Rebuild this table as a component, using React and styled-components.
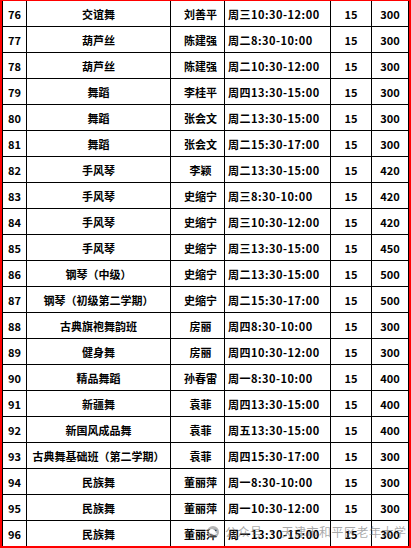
import React from 'react';
import styled, { createGlobalStyle } from 'styled-components';

const GlobalStyle = createGlobalStyle`
  html, body {
    margin: 0;
    padding: 0;
    background: #fff;
  }
`;

const Frame = styled.div`
  position: relative;
  width: 411px;
  height: 548px;
  box-sizing: border-box;
  border: 2px solid #f00;
  border-top-width: 1px;
  background: #fff;
  overflow: hidden;
  font-family: "Noto Sans CJK SC", "Noto Sans", sans-serif;
  font-weight: 700;
  font-size: 11px;
  color: #000;
`;

const Row = styled.div`
  display: grid;
  grid-template-columns: 24px 144px 54px 106px 41px 37px;
  height: 26px;
  box-sizing: border-box;
  border-left: 1px solid #000;
  border-bottom: 1px solid #000;
`;

const Cell = styled.div`
  display: flex;
  align-items: center;
  justify-content: ${(p) => (p.left ? 'flex-start' : 'center')};
  padding-left: ${(p) => p.pl || 0}px;
  box-sizing: border-box;
  border-right: 1px solid #000;
  white-space: nowrap;
  overflow: hidden;
  letter-spacing: ${(p) => p.ls || 0}px;
`;

const Watermark = styled.div`
  position: absolute;
  left: 205px;
  bottom: 6px;
  display: flex;
  align-items: center;
  gap: 6px;
  color: rgba(110, 110, 110, 0.6);
  font-weight: 400;
  font-size: 12px;
  letter-spacing: 0.5px;
  pointer-events: none;
`;

const rows = [
  ['76', '交谊舞', '刘善平', '周三10:30-12:00', '15', '300'],
  ['77', '葫芦丝', '陈建强', '周二8:30-10:00', '15', '300'],
  ['78', '葫芦丝', '陈建强', '周二10:30-12:00', '15', '300'],
  ['79', '舞蹈', '李桂平', '周四13:30-15:00', '15', '300'],
  ['80', '舞蹈', '张会文', '周二13:30-15:00', '15', '300'],
  ['81', '舞蹈', '张会文', '周二15:30-17:00', '15', '300'],
  ['82', '手风琴', '李颖', '周二13:30-15:00', '15', '420'],
  ['83', '手风琴', '史缩宁', '周三8:30-10:00', '15', '420'],
  ['84', '手风琴', '史缩宁', '周三10:30-12:00', '15', '420'],
  ['85', '手风琴', '史缩宁', '周三13:30-15:00', '15', '450'],
  ['86', '钢琴（中级）', '史缩宁', '周二13:30-15:00', '15', '500'],
  ['87', '钢琴（初级第二学期）', '史缩宁', '周二15:30-17:00', '15', '500'],
  ['88', '古典旗袍舞韵班', '房丽', '周四8:30-10:00', '15', '300'],
  ['89', '健身舞', '房丽', '周四10:30-12:00', '15', '300'],
  ['90', '精品舞蹈', '孙春雷', '周一8:30-10:00', '15', '400'],
  ['91', '新疆舞', '袁菲', '周四13:30-15:00', '15', '400'],
  ['92', '新国风成品舞', '袁菲', '周五13:30-15:00', '15', '400'],
  ['93', '古典舞基础班（第二学期）', '袁菲', '周四15:30-17:00', '15', '300'],
  ['94', '民族舞', '董丽萍', '周一8:30-10:00', '15', '300'],
  ['95', '民族舞', '董丽萍', '周一10:30-12:00', '15', '300'],
  ['96', '民族舞', '董丽萍', '周一13:30-15:00', '15', '300'],
];

const WeChatIcon = () => (
  <svg width="12" height="12" viewBox="0 0 12 12">
    <circle cx="6" cy="6" r="6" fill="rgba(120,120,120,0.55)" />
    <ellipse cx="5" cy="5.4" rx="3" ry="2.4" fill="#fff" />
    <ellipse cx="7.4" cy="7.2" rx="2.4" ry="1.9" fill="#fff" opacity="0.9" />
  </svg>
);

const App = () => (
  <>
    <GlobalStyle />
    <Frame>
      {rows.map((r) => (
        <Row key={r[0]}>
          <Cell>{r[0]}</Cell>
          <Cell>{r[1]}</Cell>
          <Cell pl={6}>{r[2]}</Cell>
          <Cell left pl={3} ls={0.5}>{r[3]}</Cell>
          <Cell>{r[4]}</Cell>
          <Cell>{r[5]}</Cell>
        </Row>
      ))}
      <Watermark>
        <WeChatIcon />
        <span>公众号 · 天津市和平区老年大学</span>
      </Watermark>
    </Frame>
  </>
);

export default App;
